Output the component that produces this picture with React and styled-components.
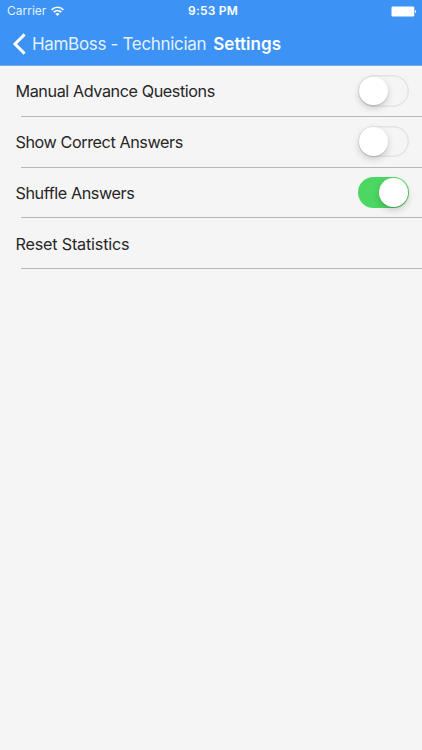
import React, { useState } from "react";
import styled, { createGlobalStyle } from "styled-components";

const colors = {
  primary: "#3c92f5",
  background: "#f5f5f5",
  text: "#262626",
  divider: "#b8b8b9",
  on: "#4cd763",
};

const GlobalStyle = createGlobalStyle`
  * {
    box-sizing: border-box;
  }

  body {
    margin: 0;
    background: ${colors.background};
    font-family: Inter, "Liberation Sans", sans-serif;
    overflow: hidden;
  }
`;

const Screen = styled.div`
  display: flex;
  flex-direction: column;
  height: 100vh;
  background: ${colors.background};
  color: ${colors.text};
`;

const TopArea = styled.header`
  height: 66px;
  background: ${colors.primary};
  border-bottom: 1px solid #75aaed;
  color: #ffffff;
`;

const StatusBar = styled.div`
  display: grid;
  grid-template-columns: 1fr auto 1fr;
  align-items: center;
  height: 22px;
  padding: 0 5px 0 7px;
  font-size: 12px;
  line-height: 22px;
`;

const Carrier = styled.div`
  display: flex;
  align-items: center;
  gap: 5px;
  color: #e3f0ff;
`;

const Clock = styled.div`
  padding-left: 2px;
  font-weight: 600;
  letter-spacing: 0.2px;
`;

const BatteryIcon = styled.svg`
  justify-self: end;
`;

const NavBar = styled.nav`
  display: flex;
  align-items: center;
  height: 43px;
  padding-left: 12px;
  font-size: 17px;
  white-space: nowrap;
`;

const BackButton = styled.button`
  display: flex;
  align-items: center;
  gap: 6px;
  padding: 0;
  border: none;
  background: none;
  color: #e6f1ff;
  font: inherit;
  letter-spacing: -0.32px;
  cursor: pointer;
`;

const Title = styled.h1`
  margin: 0 0 0 7px;
  font-size: 17px;
  font-weight: 600;
  letter-spacing: 0.05px;
`;

const List = styled.ul`
  margin: 0;
  padding: 0;
  list-style: none;
`;

const Row = styled.li`
  display: flex;
  align-items: center;
  justify-content: space-between;
  height: 50.8px;
  padding: 0 13px 1px 15.5px;
  background: linear-gradient(${colors.divider}, ${colors.divider}) 21px 100% / 100% 1px no-repeat;
`;

const Label = styled.span`
  padding-top: 1px;
  font-size: 16.2px;
  line-height: 20px;
  letter-spacing: ${(props) => props.$spacing || "-0.42px"};
`;

const Track = styled.button`
  display: flex;
  align-items: center;
  justify-content: ${(props) => (props.$on ? "flex-end" : "flex-start")};
  width: 51.5px;
  height: 31.5px;
  padding: 0 1.5px;
  border: none;
  border-radius: 16px;
  background: ${(props) => (props.$on ? colors.on : "transparent")};
  box-shadow: ${(props) => (props.$on ? "none" : "inset 0 0 0 1.5px #e4e4e4")};
  cursor: pointer;
`;

const Knob = styled.span`
  width: 28.5px;
  height: 28.5px;
  border-radius: 50%;
  background: #ffffff;
  box-shadow: 0 3px 7px rgba(0, 0, 0, 0.18), 0 1px 1px rgba(0, 0, 0, 0.12);
`;

const SETTINGS = [
  { id: "manual", label: "Manual Advance Questions", value: false },
  { id: "correct", label: "Show Correct Answers", value: false },
  { id: "shuffle", label: "Shuffle Answers", value: true },
  { id: "reset", label: "Reset Statistics", spacing: "-0.2px" },
];

const App = () => {
  const [settings, setSettings] = useState(SETTINGS);

  const toggle = (id) => {
    setSettings(settings.map((s) => (s.id === id ? { ...s, value: !s.value } : s)));
  };

  return (
    <Screen>
      <GlobalStyle />
      <TopArea>
        <StatusBar>
          <Carrier>
            Carrier
            <svg width="13" height="11" viewBox="0 0 13 11" fill="none" stroke="#fff" strokeWidth="1.6">
              <path d="M0.6 3.9C3.9 0.3 9.1 0.3 12.4 3.9" />
              <path d="M2.7 6.2C4.9 4.1 8.1 4.1 10.3 6.2" />
              <path d="M6.5 10L4.3 7.8C5.6 6.6 7.4 6.6 8.7 7.8Z" fill="#fff" stroke="none" />
            </svg>
          </Carrier>
          <Clock>9:53 PM</Clock>
          <BatteryIcon width="26" height="11" viewBox="0 0 26 11">
            <rect x="0.5" y="0.5" width="22.8" height="10" rx="1.2" fill="#fff" />
            <path d="M24 3.7C25.4 4.3 25.4 6.7 24 7.3Z" fill="#fff" />
          </BatteryIcon>
        </StatusBar>
        <NavBar>
          <BackButton>
            <svg width="14" height="22" viewBox="0 0 14 22" fill="none" stroke="#fff" strokeWidth="3">
              <path d="M12.6 1.4L3 11L12.6 20.6" />
            </svg>
            HamBoss - Technician
          </BackButton>
          <Title>Settings</Title>
        </NavBar>
      </TopArea>

      <List>
        {settings.map((s) => (
          <Row key={s.id}>
            <Label $spacing={s.spacing}>{s.label}</Label>
            {s.value !== undefined && (
              <Track $on={s.value} aria-label={s.label} onClick={() => toggle(s.id)}>
                <Knob />
              </Track>
            )}
          </Row>
        ))}
      </List>
    </Screen>
  );
};

export default App;
